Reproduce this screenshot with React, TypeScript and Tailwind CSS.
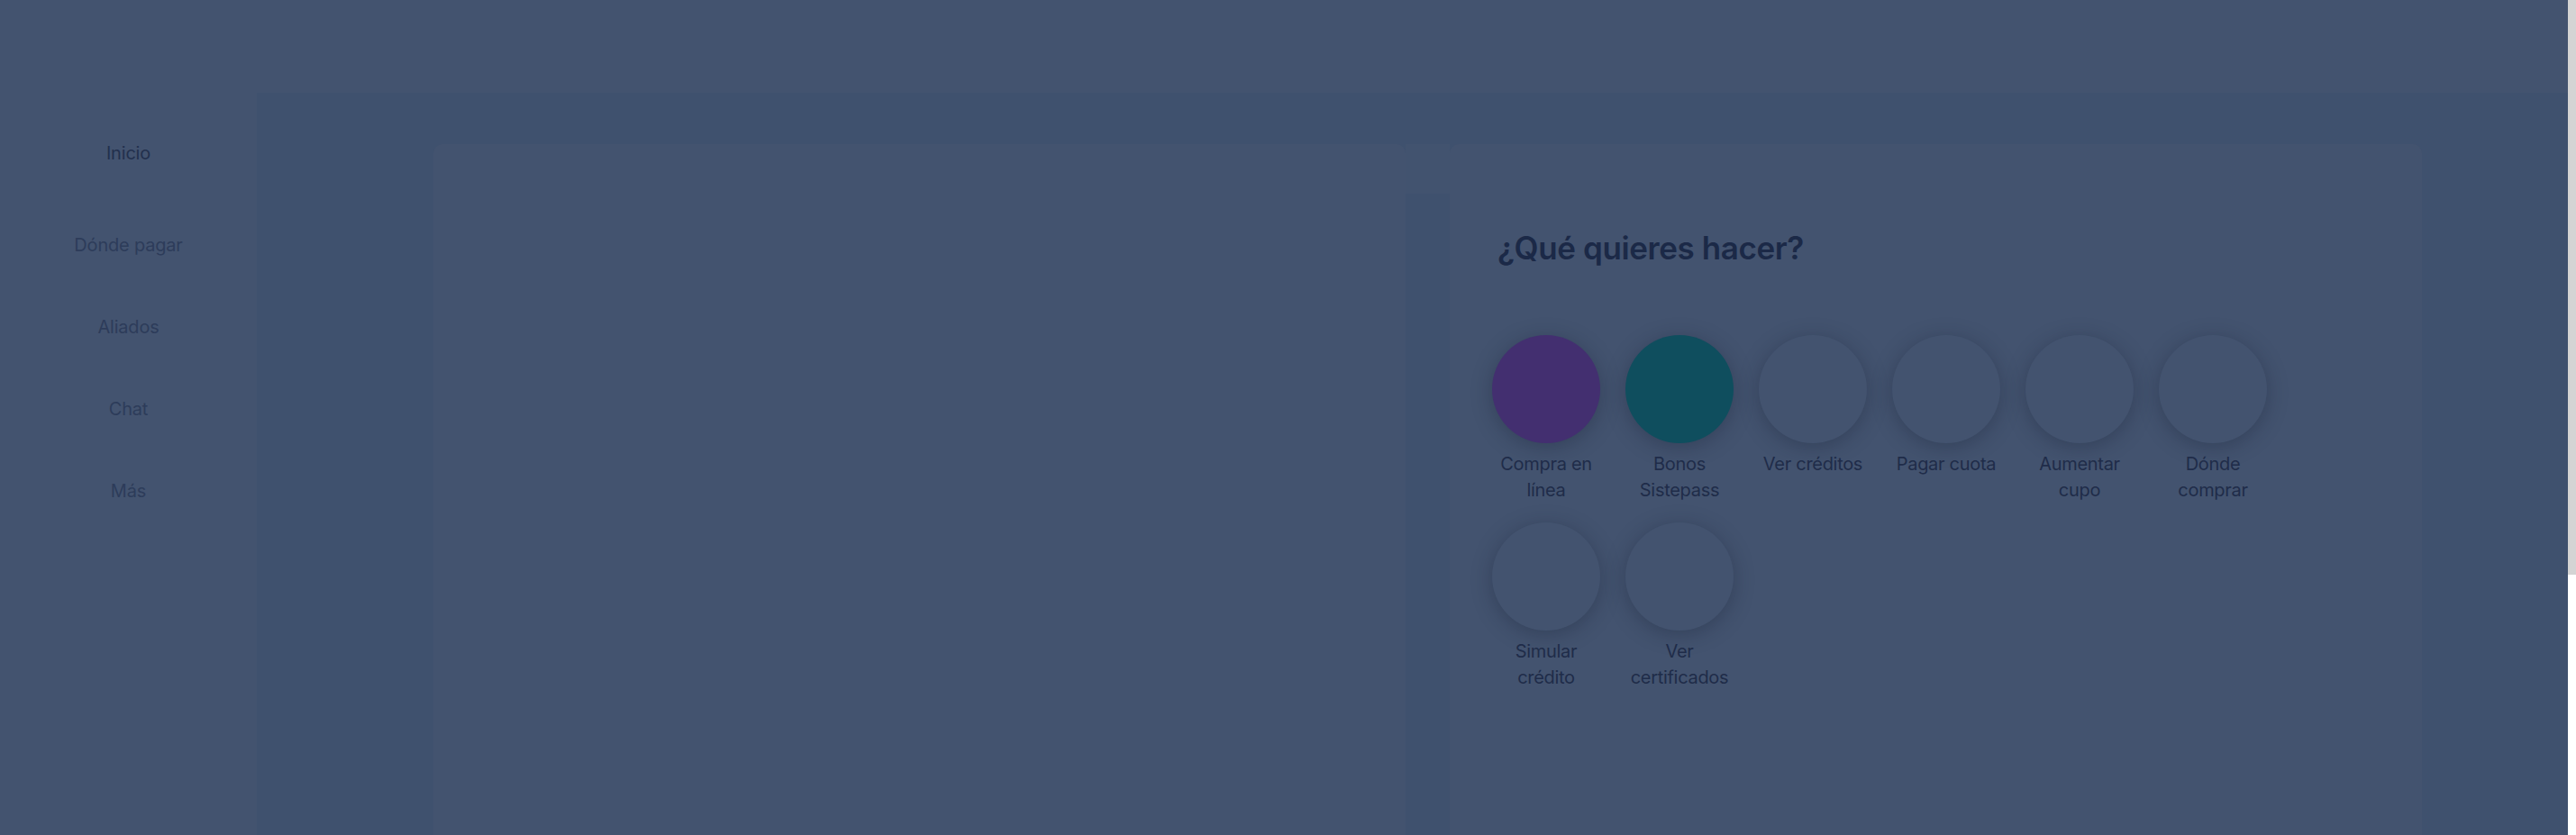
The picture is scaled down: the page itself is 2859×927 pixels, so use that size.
const NAV_ITEMS = ["Inicio", "Dónde pagar", "Aliados", "Chat", "Más"];

const ACTIONS = [
  { label: "Compra en línea", color: "bg-[#432f70]" },
  { label: "Bonos Sistepass", color: "bg-[#0f4e5e]" },
  { label: "Ver créditos", color: "bg-[#43536f]" },
  { label: "Pagar cuota", color: "bg-[#43536f]" },
  { label: "Aumentar cupo", color: "bg-[#43536f]" },
  { label: "Dónde comprar", color: "bg-[#43536f]" },
  { label: "Simular crédito", color: "bg-[#43536f]" },
  { label: "Ver certificados", color: "bg-[#43536f]" },
];

const Sidebar = () => {
  return (
    <aside className="w-[285px] shrink-0 bg-[#43536f] flex flex-col items-center pt-[156px]">
      {NAV_ITEMS.map((item, i) => (
        <span
          key={item}
          className={`h-[28px] leading-[28px] text-[20px] tracking-[-0.2px] ${
            i === 0 ? "text-[#22304d] mb-[74px]" : "text-[#2d3c5a] mb-[63px]"
          }`}
        >
          {item}
        </span>
      ))}
    </aside>
  );
};

const ActionItem = ({ label, color }: { label: string; color: string }) => {
  return (
    <div className="w-[120px] flex flex-col items-center">
      <div className={`w-[120px] h-[120px] rounded-full shadow-[0_4px_22px_rgba(22,32,52,0.35)] ${color}`} />
      <span className="mt-[9px] text-center text-[20px] leading-[29px] tracking-[-0.3px] text-[#1f2c49]">
        {label}
      </span>
    </div>
  );
};

export default function App() {
  return (
    <div className="w-full h-[927px] flex overflow-hidden font-['Inter','Liberation_Sans',sans-serif]">
      <div className="flex-1 flex min-w-0">
        <Sidebar />
        <main className="flex-1 flex flex-col bg-[#3f516e]">
          <header className="h-[103px] shrink-0 bg-[#43536f]" />
          <div className="flex-1 flex pl-[196px] pt-[57px]">
            <section className="w-[1079px] rounded-t-[10px] bg-[#43536f]" />
            <div className="w-[49px] flex flex-col">
              <div className="h-[55px] bg-[#42536f]" />
            </div>
            <section className="w-[1079px] rounded-t-[10px] bg-[#43536f] pl-[47px] pt-[94px]">
              <h2 className="ml-[6px] text-[35px] leading-[42px] font-semibold tracking-[-0.4px] text-[#1b2947]">
                ¿Qué quieres hacer?
              </h2>
              <div className="mt-[76px] grid grid-cols-[repeat(6,120px)] gap-x-[28px] gap-y-[21px]">
                {ACTIONS.map((a) => (
                  <ActionItem key={a.label} label={a.label} color={a.color} />
                ))}
              </div>
            </section>
          </div>
        </main>
      </div>
      <div className="w-[9px] shrink-0 flex flex-col">
        <div className="h-[638px] bg-[#d4d4d4]" />
        <div className="flex-1 bg-white" />
      </div>
    </div>
  );
}
